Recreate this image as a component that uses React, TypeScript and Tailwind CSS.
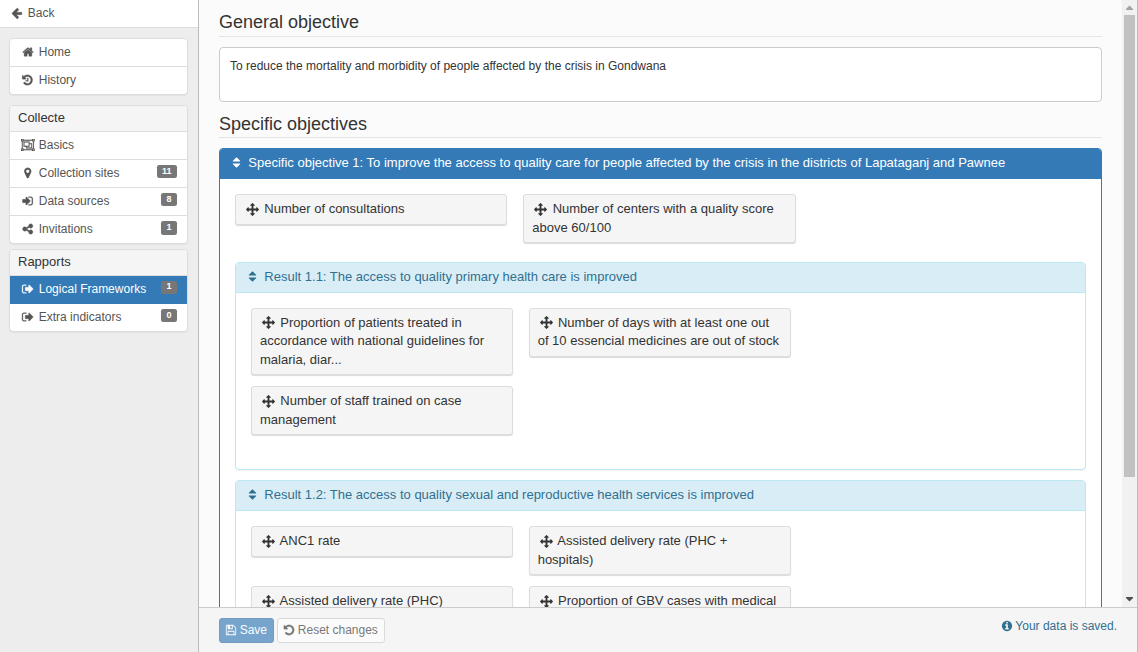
import React from "react";

const UNDO =
  "M1664 896q0 156-61 298t-164 245-245 164-298 61q-172 0-327-72.5t-264-204.5q-7-10-6.5-22.5t8.5-20.5l137-138q10-9 25-9 16 2 23 12 73 95 179 147t225 52q104 0 198.5-40.5t163.5-109.5 109.5-163.5 40.5-198.5-40.5-198.5-109.5-163.5-163.5-109.5-198.5-40.5q-98 0-188 35.5t-160 101.5l137 138q31 30 14 69-17 40-59 40h-448q-26 0-45-19t-19-45v-448q0-42 40-59 39-17 69 14l130 129q107-101 244.5-156.5t284.5-55.5q156 0 298 61t245 164 164 245 61 298z";

const ICONS = {
  back: "M1664 896v128q0 53-32.5 90.5t-84.5 37.5h-704l293 294q38 36 38 90t-38 90l-75 76q-37 37-90 37-52 0-91-37l-651-652q-37-37-37-90 0-52 37-91l651-650q38-38 91-38 52 0 90 38l75 74q38 38 38 91t-38 91l-293 293h704q52 0 84.5 37.5t32.5 90.5z",
  home: "M1472 992v480q0 26-19 45t-45 19h-384v-384h-256v384h-384q-26 0-45-19t-19-45v-480q0-1 .5-3t.5-3l575-474 575 474q1 2 1 6zm223-69l-62 74q-8 9-21 11h-3q-13 0-21-7l-692-577-692 577q-12 8-24 7-13-2-21-11l-62-74q-8-10-7-23.5t11-21.5l719-599q32-26 76-26t76 26l244 204v-195q0-14 9-23t23-9h192q14 0 23 9t9 23v408l219 182q10 8 11 21.5t-7 23.5z",
  history: UNDO + "M1024 608v448q0 14-9 23t-23 9h-320q-14 0-23-9t-9-23v-64q0-14 9-23t23-9h224v-352q0-14 9-23t23-9h64q14 0 23 9t9 23z",
  marker: "M1152 640q0-106-75-181t-181-75-181 75-75 181 75 181 181 75 181-75 75-181zm256 0q0 109-33 179l-364 774q-16 33-47.5 52t-67.5 19-67.5-19-46.5-52l-365-774q-33-70-33-179 0-212 150-362t362-150 362 150 150 362z",
  signIn: "M1312 896q0 26-19 45l-544 544q-19 19-45 19t-45-19-19-45v-288h-448q-26 0-45-19t-19-45v-384q0-26 19-45t45-19h448v-288q0-26 19-45t45-19 45 19l544 544q19 19 19 45zm352-352v704q0 119-84.5 203.5t-203.5 84.5h-320q-13 0-22.5-9.5t-9.5-22.5q0-4-1-20t-.5-26.5 3-23.5 10-19.5 20.5-6.5h320q66 0 113-47t47-113v-704q0-66-47-113t-113-47h-312l-11.5-1-11.5-3-8-5.5-7-9-2-13.5q0-4-1-20t-.5-26.5 3-23.5 10-19.5 20.5-6.5h320q119 0 203.5 84.5t84.5 203.5z",
  signOut: "M704 1440q0 4 1 20t.5 26.5-3 23.5-10 19.5-20.5 6.5h-320q-119 0-203.5-84.5t-84.5-203.5v-704q0-119 84.5-203.5t203.5-84.5h320q13 0 22.5 9.5t9.5 22.5q0 4 1 20t.5 26.5-3 23.5-10 19.5-20.5 6.5h-320q-66 0-113 47t-47 113v704q0 66 47 113t113 47h312l11.5 1 11.5 3 8 5.5 7 9 2 13.5zm1024-544q0 26-19 45l-544 544q-19 19-45 19t-45-19-19-45v-288h-448q-26 0-45-19t-19-45v-384q0-26 19-45t45-19h448v-288q0-26 19-45t45-19 45 19l544 544q19 19 19 45z",
  share: "M1344 1024q133 0 226.5 93.5t93.5 226.5-93.5 226.5-226.5 93.5-226.5-93.5-93.5-226.5q0-12 2-34l-360-180q-92 86-218 86-133 0-226.5-93.5t-93.5-226.5 93.5-226.5 226.5-93.5q126 0 218 86l360-180q-2-22-2-34 0-133 93.5-226.5t226.5-93.5 226.5 93.5 93.5 226.5-93.5 226.5-226.5 93.5q-126 0-218-86l-360 180q2 22 2 34t-2 34l360 180q92-86 218-86z",
  sort: "M1408 1088q0 26-19 45l-448 448q-19 19-45 19t-45-19l-448-448q-19-19-19-45t19-45 45-19h896q26 0 45 19t19 45zm0-384q0 26-19 45t-45 19h-896q-26 0-45-19t-19-45 19-45l448-448q19-19 45-19t45 19l448 448q19 19 19 45z",
  arrows: "M1792 896q0 26-19 45l-256 256q-19 19-45 19t-45-19-19-45v-128h-384v384h128q26 0 45 19t19 45-19 45l-256 256q-19 19-45 19t-45-19l-256-256q-19-19-19-45t19-45 45-19h128v-384h-384v128q0 26-19 45t-45 19-45-19l-256-256q-19-19-19-45t19-45l256-256q19-19 45-19t45 19 19 45v128h384v-384h-128q-26 0-45-19t-19-45 19-45l256-256q19-19 45-19t45 19l256 256q19 19 19 45t-19 45-45 19h-128v384h384v-128q0-26 19-45t45-19 45 19l256 256q19 19 19 45z",
  undo: UNDO,
  save: "M512 1536h768v-384h-768v384zm896 0h128v-896q0-14-10-38.5t-20-34.5l-281-281q-10-10-34-20t-39-10v416q0 40-28 68t-68 28h-576q-40 0-68-28t-28-68v-416h-128v1280h128v-416q0-40 28-68t68-28h832q40 0 68 28t28 68v416zm-384-928v-320q0-13-9.5-22.5t-22.5-9.5h-192q-13 0-22.5 9.5t-9.5 22.5v320q0 13 9.5 22.5t22.5 9.5h192q13 0 22.5-9.5t9.5-22.5zm640 32v928q0 40-28 68t-68 28h-1344q-40 0-68-28t-28-68v-1344q0-40 28-68t68-28h928q40 0 88 20t76 48l280 280q28 28 48 76t20 88z",
  info: "M1152 1376v-160q0-14-9-23t-23-9h-96v-512q0-14-9-23t-23-9h-320q-14 0-23 9t-9 23v160q0 14 9 23t23 9h96v320h-96q-14 0-23 9t-9 23v160q0 14 9 23t23 9h448q14 0 23-9t9-23zm-128-896v-160q0-14-9-23t-23-9h-192q-14 0-23 9t-9 23v160q0 14 9 23t23 9h192q14 0 23-9t9-23zm640 416q0 209-103 385.5t-279.5 279.5-385.5 103-385.5-103-279.5-279.5-103-385.5 103-385.5 279.5-279.5 385.5-103 385.5 103 279.5 279.5 103 385.5z",
};

const GROUP =
  "M2048 384h-128v1024h128v384h-384v-128H384v128H0v-384h128V384H0V0h384v128h1280V0h384zM1792 128v128h128V128zM128 128v128h128V128zM128 1536v128h128v-128zM1792 1536v128h128v-128zM384 256v128H256v1024h128v128h1280v-128h128V384h-128V256zM1280 640h384v768H768v-256H384V384h896zM512 1024h640V512H512zM1536 1280V768h-256v384H896v128z";

type IconName = keyof typeof ICONS | "group";

// Optical adjustments in glyph units: horizontal shift and extra outline weight.
const SHIFT: Partial<Record<IconName, number>> = { history: -90, marker: -40, signIn: -60, signOut: -60, share: -40, back: -30 };
const WEIGHT: Partial<Record<IconName, number>> = { save: 0, info: 0, arrows: 0, sort: 0 };

function Icon({ name, fixed = true }: { name: IconName; fixed?: boolean }) {
  const svg =
    name === "group" ? (
      <svg viewBox="0 0 2048 1792" className="inline-block h-[1em] w-[1.143em] align-[-0.143em]" fill="currentColor" fillRule="evenodd" stroke="currentColor" strokeWidth="20">
        <path d={GROUP} />
      </svg>
    ) : (
      <svg
        viewBox="0 0 1792 1792"
        className={`inline-block size-[1em] overflow-visible ${name === "arrows" ? "align-[-0.23em]" : "align-[-0.143em]"} ${fixed ? "" : "-mx-[0.0714em]"}`}
        fill="currentColor"
        stroke="currentColor"
        strokeWidth={WEIGHT[name] ?? 50}
      >
        <path d={ICONS[name]} transform={`translate(${SHIFT[name] ?? 0} 0)`} />
      </svg>
    );
  return <span className={fixed ? "inline-block w-[1.2857em] text-center leading-none" : "inline-block leading-none"}>{svg}</span>;
}

type Item = { icon: IconName; label: string; count?: number; active?: boolean; badge?: string };

function MenuPanel({ title, items }: { title?: string; items: Item[] }) {
  return (
    <div className="overflow-hidden rounded-[4px] border border-[#ddd] bg-white shadow-[0_1px_1px_rgba(0,0,0,0.05)]">
      {title && <div className="h-[25px] bg-[#f5f5f5] pl-2 text-[13px] leading-[23px] text-[#333]">{title}</div>}
      {items.map((item, i) => (
        <div
          key={item.label}
          className={`flex justify-between px-[10px] ${i > 0 || title ? "h-7 border-t" : "h-[27px]"} ${
            i > 0 && items[i - 1].active ? "border-[#337ab7]" : "border-[#ddd]"
          } ${item.active ? "bg-[#337ab7] text-white" : "text-[#555]"}`}
        >
          <span className="whitespace-nowrap leading-[26px]">
            <Icon name={item.icon} /> {item.label}
          </span>
          {item.count !== undefined && (
            <span className={`mt-[5px] rounded-[2.25px] bg-[#777] px-[5.4px] text-[9px] font-bold text-white ${item.badge ?? "h-[13px] leading-[13px]"}`}>
              {item.count}
            </span>
          )}
        </div>
      ))}
    </div>
  );
}

function Card({ children, size, lines = 1, tight }: { children: string; size: "lg" | "sm"; lines?: number; tight?: boolean }) {
  return (
    <div
      className={`rounded-[3px] border border-[#ddd] bg-[#f5f5f5] px-2 text-[13px] leading-[18.57px] text-[#333] shadow-[0_1px_1px_rgba(0,0,0,0.15)] ${
        tight ? "pt-[4.5px]" : "pt-[5px]"
      } ${size === "lg" ? "w-[272.33px]" : "w-[262px]"} ${lines === 3 ? "h-[67px]" : lines === 2 ? "h-[49px]" : "h-[31px]"}`}
    >
      <Icon name="arrows" /> {children}
    </div>
  );
}

function Result({ title, children, height }: { title: string; children: React.ReactNode; height: string }) {
  return (
    <section className={`overflow-hidden rounded-[4px] border border-[#bce8f1] bg-white shadow-[0_1px_1px_rgba(0,0,0,0.05)] ${height}`}>
      <h3 className="h-[30px] border-b border-[#bce8f1] bg-[#d9edf7] px-2 text-[13px] leading-[28px] text-[#31708f]">
        <Icon name="sort" /> {title}
      </h3>
      <div className="flex flex-col gap-[11px] p-[15px]">{children}</div>
    </section>
  );
}

function Row({ children, narrow }: { children: React.ReactNode; narrow?: boolean }) {
  return <div className={`flex items-start ${narrow ? "gap-[15.67px]" : "gap-4"}`}>{children}</div>;
}

function Heading({ children, low }: { children: string; low?: boolean }) {
  return <h2 className={`h-[27px] border-b border-[#e5e5e5] text-[18px] text-[#333] ${low ? "leading-[26px]" : "leading-[24px]"}`}>{children}</h2>;
}

function Sidebar() {
  return (
    <aside className="flex w-[199px] shrink-0 flex-col border-r border-[#bbb] bg-[#ededed]">
      <div className="h-7 border-b border-[#ddd] bg-white pl-[9px] leading-[26px] text-[#555]">
        <Icon name="back" /> Back
      </div>
      <nav className="flex flex-col pl-[9px] pr-[10px] pt-[10px]">
        <MenuPanel items={[{ icon: "home", label: "Home" }, { icon: "history", label: "History" }]} />
        <div className="h-[10px]" />
        <MenuPanel
          title="Collecte"
          items={[
            { icon: "group", label: "Basics" },
            { icon: "marker", label: "Collection sites", count: 11 },
            { icon: "signIn", label: "Data sources", count: 8 },
            { icon: "share", label: "Invitations", count: 1, badge: "h-[14px] leading-[13px]" },
          ]}
        />
        <div className="h-[5px]" />
        <MenuPanel
          title="Rapports"
          items={[
            { icon: "signOut", label: "Logical Frameworks", count: 1, active: true, badge: "h-[13px] leading-[11px]" },
            { icon: "signOut", label: "Extra indicators", count: 0 },
          ]}
        />
      </nav>
    </aside>
  );
}

function Scrollbar() {
  return (
    <div className="flex w-[15px] shrink-0 flex-col items-center justify-between bg-[#f1f1f1]">
      <div className="flex flex-col items-center">
        <svg className="h-[15px] w-[15px]" viewBox="0 0 15 15" fill="#a3a3a3">
          <path d="M4 10V9L7.5 5.5L11 9v1z" />
        </svg>
        <div className="h-[462px] w-[11px] bg-[#c1c1c1]" />
      </div>
      <svg className="h-[15px] w-[15px]" viewBox="0 0 15 15" fill="#505050">
        <path d="M4 5v1L7.5 9.5L11 6V5z" />
      </svg>
    </div>
  );
}

export default function App() {
  return (
    <div className="flex h-[652px] w-[1138px] overflow-hidden bg-[#fbfbfb] font-['Liberation_Sans',Arial,sans-serif] text-[12px] leading-[17px] text-[#333]">
      <Sidebar />
      <div className="flex min-w-0 grow flex-col border-r border-[#bbb]">
        <div className="flex h-[607px] shrink-0 overflow-hidden">
          <main className="min-w-0 grow px-5 pt-[10px]">
            <Heading>General objective</Heading>
            <div className="mt-[10px] h-[55px] rounded-[4px] border border-[#ccc] bg-white px-[10px] pt-[10px]">
              To reduce the mortality and morbidity of people affected by the crisis in Gondwana
            </div>
            <div className="h-[9px]" />
            <Heading low>Specific objectives</Heading>
            <section className="mt-[10px] overflow-hidden rounded-[4px] border border-[#337ab7] bg-white">
              <h3 className="h-[30px] bg-[#337ab7] px-2 text-[13px] leading-[28px] text-white">
                <Icon name="sort" /> Specific objective 1: To improve the access to quality care for people affected by the crisis in the districts of Lapataganj and Pawnee
              </h3>
              <div className="flex flex-col p-[15px]">
                <Row>
                  <Card size="lg">Number of consultations</Card>
                  <Card size="lg" lines={2}>Number of centers with a quality score above 60/100</Card>
                </Row>
                <div className="h-[19px]" />
                <Result title="Result 1.1: The access to quality primary health care is improved" height="h-[208px]">
                  <Row narrow>
                    <Card size="sm" lines={3} tight>Proportion of patients treated in accordance with national guidelines for malaria, diar...</Card>
                    <Card size="sm" lines={2} tight>Number of days with at least one out of 10 essencial medicines are out of stock</Card>
                  </Row>
                  <Row narrow>
                    <Card size="sm" lines={2}>Number of staff trained on case management</Card>
                  </Row>
                </Result>
                <div className="h-[10px]" />
                <Result title="Result 1.2: The access to quality sexual and reproductive health services is improved" height="h-[220px]">
                  <Row narrow>
                    <Card size="sm">ANC1 rate</Card>
                    <Card size="sm" lines={2}>Assisted delivery rate (PHC + hospitals)</Card>
                  </Row>
                  <Row narrow>
                    <Card size="sm">Assisted delivery rate (PHC)</Card>
                    <Card size="sm" lines={2}>Proportion of GBV cases with medical</Card>
                  </Row>
                </Result>
              </div>
            </section>
          </main>
          <Scrollbar />
        </div>
        <footer className="flex grow items-start justify-between border-t border-[#ccc] bg-[#f5f5f5] pl-5 pr-5 pt-[10px]">
          <div className="flex gap-[3px]">
            <button className="h-[25px] w-[55px] whitespace-nowrap rounded-[3px] border border-[#2e6da4] bg-[#337ab7] text-center text-white opacity-65">
              <Icon name="save" fixed={false} /> Save
            </button>
            <button className="h-[25px] w-[108px] whitespace-nowrap rounded-[3px] border border-[#ccc] bg-white text-center text-[#333] opacity-65">
              <Icon name="undo" fixed={false} /> Reset changes
            </button>
          </div>
          <div className="text-[#31708f]">
            <Icon name="info" fixed={false} /> Your data is saved.
          </div>
        </footer>
      </div>
    </div>
  );
}
